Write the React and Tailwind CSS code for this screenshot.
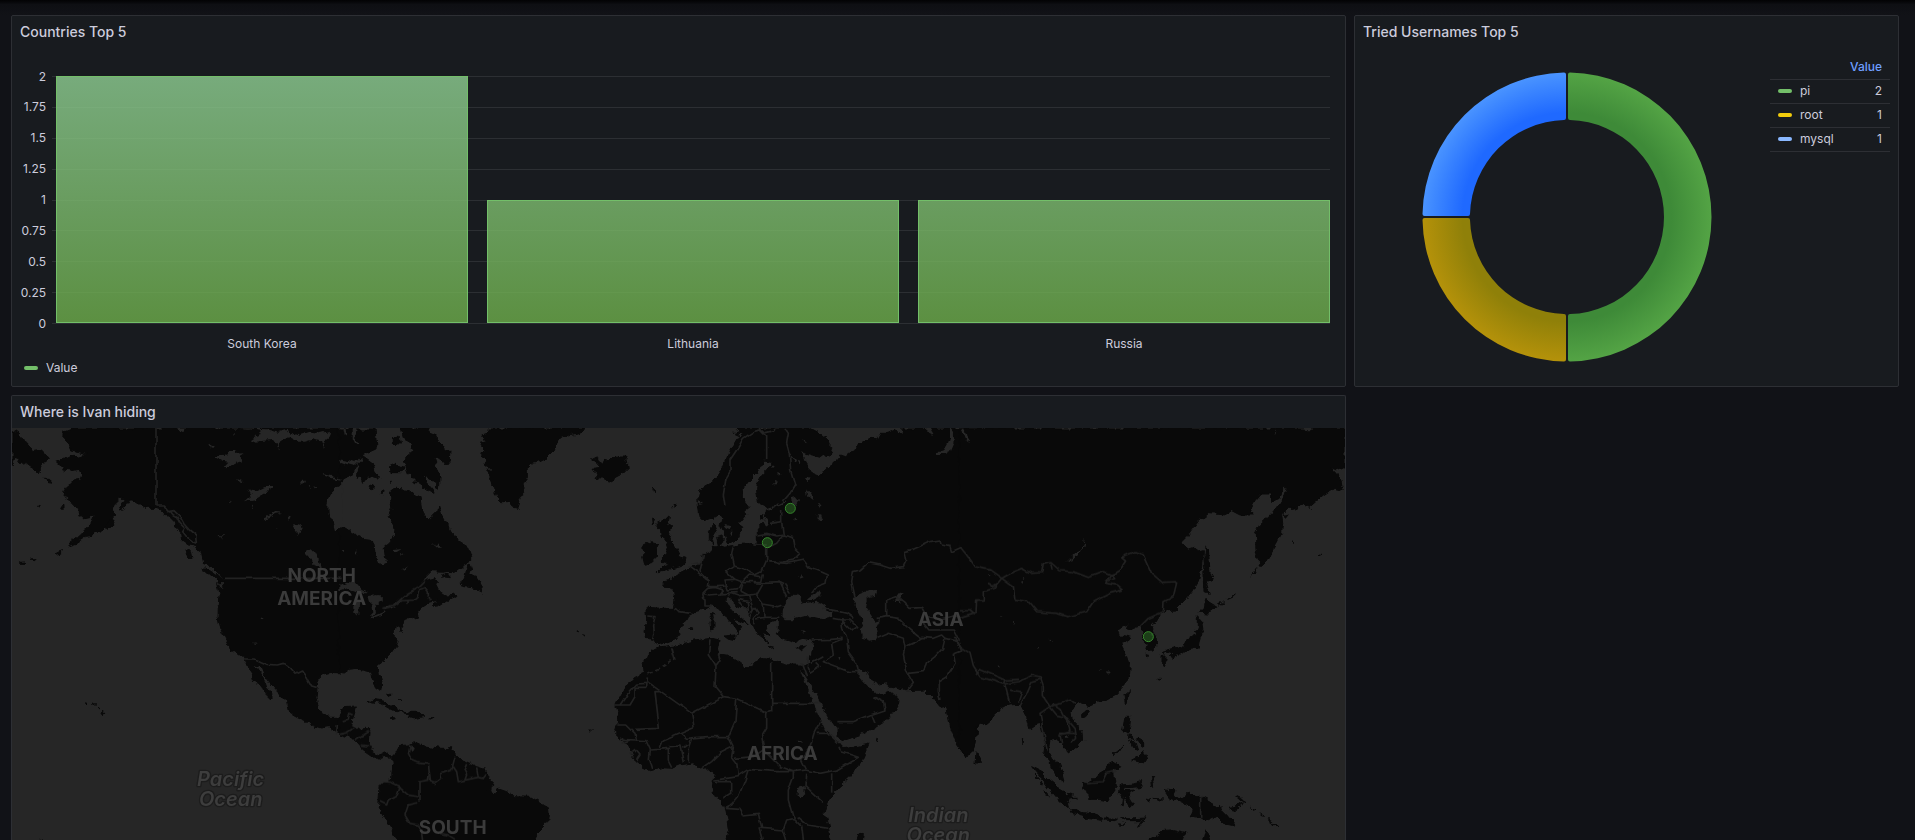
import React from "react";

const TICKS = ["2", "1.75", "1.5", "1.25", "1", "0.75", "0.5", "0.25", "0"];

const COUNTRIES = [
  { name: "South Korea", bar: "h-full from-[#8fcf93cc] via-[#7ebd70cc] to-[#6dad4acc]" },
  { name: "Lithuania", bar: "h-1/2 from-[#7ebd70cc] to-[#6dad4acc]" },
  { name: "Russia", bar: "h-1/2 from-[#7ebd70cc] to-[#6dad4acc]" },
];

const USERS = [
  { name: "pi", value: 2, swatch: "bg-[#73bf69]" },
  { name: "root", value: 1, swatch: "bg-[#f2cc0c]" },
  { name: "mysql", value: 1, swatch: "bg-[#8ab8ff]" },
];

/* Map geometry is stored in four regions; each has its own x origin. */
const REGIONS = [
  {
    x: 0,
    land: [
      "36,92 55,100 75,122 92,140 97,155 125,150 148,175 135,188 120,190 125,208 112,218 95,205 75,190 60,178 45,172 36,198",
      "127,238 145,238 158,250 140,247",
      "180,318 195,316 195,324 184,325",
      "218,84 190,95 188,112 205,130 215,150 240,155 262,162 235,168 215,165 190,178 170,187 190,200 185,210 215,213 240,208 248,225 243,240 225,243 205,255 195,270 192,290 205,300 210,310 225,318 235,325 240,352 262,348 283,345 275,362 262,385 245,402 225,420 203,437 230,428 255,412 270,410 300,392 312,380 330,365 338,350 345,345 335,335 345,310 360,295 375,295 368,308 355,330 375,322 390,300 398,300 405,312 425,312 440,322 468,322 485,328 500,345 520,365 530,385 545,400 548,420 565,432 585,435 590,450 605,460 612,490 635,500 655,520 670,540 672,565 650,548 657,580 655,620 654,650 660,680 672,705 682,725 695,750 715,762 730,772 738,785 748,810 765,835 760,842 785,855 795,880 812,897 820,892 808,870 795,850 785,830 772,810 760,792 780,800 790,825 805,845 822,865 845,888 862,905 866,925 870,940 890,952 920,965 945,978 962,984 985,980 1000,990 1022,1003 1022,952 990,952 970,945 955,925 948,890 952,860 955,835 970,822 1000,815 1022,815 1022,84",
      "318,378 330,362 345,360 340,375 325,388",
      "612,502 632,512 655,528 672,545 655,545 635,530 615,512",
      "558,445 570,450 576,476 565,468",
      "162,462 175,455 188,452 178,460",
      "56,487 75,486 74,490 58,490",
      "95,480 105,478 103,482",
      "302,938 308,931 315,939 308,947",
      "278,914 284,918 279,918",
      "294,922 300,926 294,926",
      "260,908 264,911 260,911",
      "113,312 121,314 116,318",
      "116,1314 124,1316 126,1320 118,1320",
    ],
    water: [
      "1028,252 1005,265 990,290 982,315 983,345 1000,360 1008,388 1020,384 1028,386",
      "645,172 665,165 690,155 712,150 705,162 728,160 722,175 728,185 715,182 700,190 690,200 680,205 670,198 682,185 665,182",
      "735,300 755,290 752,280 745,268 765,275 780,268 800,258 822,258 805,268 795,282 780,290 765,300 750,303",
      "788,352 805,345 825,335 850,338 825,342 808,350 790,358",
      "918,455 935,445 945,455 955,475 962,500 958,510 945,490 930,475 918,462",
      "755,118 770,108 785,102 780,92 720,84 800,88 835,98 858,92 865,105 885,98 900,105 930,95 960,100 990,92 985,115 970,125 975,145 965,125 940,118 915,125 895,125 870,112 850,115 835,125 840,155 830,130 815,120 790,122 770,125",
      "530,84 550,96 560,84",
      "628,135 638,145 632,152",
      "718,240 732,246 722,250",
      "900,245 915,245 910,258 902,256",
      "926,256 934,256 930,262",
      "943,255 953,260 950,266",
      "965,222 1000,228 1022,240 995,234 968,226",
      "885,370 902,375 905,388 895,405 890,390 880,382",
      "862,350 872,352 866,366",
      "655,398 662,406 675,406 664,410 670,420 658,408",
      "780,652 790,655 788,664",
      "758,728 770,727 768,732",
      "683,308 692,310 688,314",
      "755,316 764,322 758,324",
      "826,382 832,382 830,388",
      "703,95 708,100 704,112",
    ],
    lines: [
      "468,84 468,318 490,318 505,335 522,332 540,350 552,372 568,390 590,408 592,430 580,425 560,410 548,395 555,385 540,370 530,350 520,345 512,335",
      "672,535 1022,535",
      "735,777 765,777 800,793 832,795 850,790 870,805 885,823 905,813 922,835 935,858 950,862",
      "1012,975 1010,1000",
    ],
  },
  {
    x: 1020,
    land: [
      "-2,84 60,84 70,90 105,90 112,145 90,155 65,165 100,190 105,215 122,238 100,235 85,228 68,250 60,230 48,235 62,190 45,205 35,225 -2,240",
      "160,112 178,112 182,128 170,140 160,130",
      "148,200 170,190 178,200 195,205 180,218 150,218",
      "185,84 260,84 270,100 290,108 300,130 330,155 328,180 312,198 295,175 280,170 290,200 300,235 298,265 285,260 290,245 265,238 245,225 255,240 280,268 282,280 250,262 225,245 205,220 190,180 210,160 222,150 205,125 190,110",
      "84,262 98,256 104,264 92,272",
      "124,270 132,270 130,284 124,280",
      "145,242 154,240 150,248",
      "150,268 175,265 200,268 220,285 240,295 245,325 250,340 265,362 280,345 290,335 295,315 305,345 325,380 335,400 360,425 385,440 395,470 395,485 375,490 355,510 340,518 270,515 250,535 240,555 225,570 255,538 290,530 300,545 290,555 300,575 320,588 345,585 350,590 320,603 290,622 280,612 300,598 285,600 265,605 250,615 230,630 232,645 238,652 215,655 195,662 190,685 180,695 175,680 165,685 165,710 175,720 170,740 150,765 120,785 112,800 115,825 125,855 122,872 110,865 98,838 95,815 75,810 55,805 30,808 10,822 -2,818 -2,384 20,388 45,405 70,418 98,422 103,440 105,462 118,480 128,495 140,490 135,465 132,440 150,425 163,405 165,385 155,365 145,350 155,325 152,295",
      "392,490 398,510 392,525 410,530 420,545 430,560 425,573 410,565 395,560 380,558 358,555 365,545 375,525 380,505",
      "305,522 325,524 328,530 310,528",
      "-2,945 12,920 50,918 42,945 38,960 35,980 50,985 75,982 90,995 88,1035 95,1052 120,1065 140,1058 155,1070 148,1078 130,1065 122,1078 100,1070 85,1060 68,1048 45,1022 20,1010 -2,1003",
      "78,908 100,898 130,903 155,915 175,928 190,937 165,934 145,924 120,910 95,905",
      "192,934 210,937 230,937 255,948 240,952 220,957 205,952 210,944",
      "147,954 157,952 166,956 156,959",
      "270,953 284,953 284,957 271,957",
      "146,876 152,880 152,888 148,886",
      "178,895 184,900 180,902",
      "331,1040 338,1040 337,1047 331,1046",
      "155,1075 165,1055 180,1040 205,1038 222,1025 240,1035 270,1040 300,1045 330,1045 345,1065 375,1085 410,1100 435,1108 445,1130 460,1145 455,1165 440,1175 470,1165 500,1175 525,1190 575,1192 605,1212 625,1220 628,1250 615,1275 590,1300 582,1330 172,1330 155,1290 135,1255 115,1220 118,1190 120,1160 135,1145 155,1130 158,1100",
      "445,84 735,84 715,98 690,105 665,115 650,125 640,155 620,175 600,185 575,190 565,205 565,230 550,250 548,280 540,300 535,325 515,320 505,305 485,305 470,290 460,265 450,240 440,215 455,212 430,190 440,182 420,160 435,152 420,130 440,125 425,105 442,100",
      "752,178 770,168 775,180 785,190 790,178 805,180 820,175 835,165 850,165 862,185 865,205 850,220 830,230 808,243 785,235 765,232 775,222 755,208 775,205 770,192",
      "728,704 734,706 730,708",
      "712,692 716,695 712,696",
      "751,990 757,990 753,994",
    ],
    water: [
      "10,84 20,84 22,110 14,104",
      "35,84 50,84 45,120 55,135 45,135 35,115",
      "-2,178 25,183 45,190 60,172 64,180 45,198 20,192 -2,184",
      "-2,555 20,545 45,548 60,565 85,580 60,580 40,572 20,565 -2,572",
      "40,620 45,600 58,605 55,640 48,650 40,640",
      "85,588 115,585 130,600 120,605 105,615 108,640 95,650 92,625 90,605",
      "92,652 120,640 135,630 140,635 115,648 95,655",
      "130,625 155,618 165,622 145,628",
      "155,450 185,447 170,456 158,457",
      "272,432 285,438 290,430 295,442 312,445 290,447",
      "190,505 205,496 198,508",
      "215,1035 224,1045 220,1058 214,1050",
      "455,1160 475,1160 470,1180 455,1178",
      "8,450 18,450 14,456",
      "182,462 192,464 186,468",
      "50,450 56,462 50,465",
      "165,690 172,695 170,712 164,710",
    ],
    lines: [
      "130,625 165,618 185,602 222,600 235,588 240,568 255,562 265,575 265,595 272,600",
      "160,618 200,582 235,562 255,542",
      "204,600 204,612",
      "8,965 25,960 28,940 38,945",
      "0,1003 20,998 40,985",
      "45,1020 60,1010 88,995",
      "65,1035 88,1038",
      "210,1035 205,1060 215,1080 240,1090 265,1092 268,1120 265,1140 240,1145 240,1165 240,1205",
      "130,1148 155,1150 180,1162 172,1185 145,1200 140,1215 120,1205",
      "175,1160 205,1185 235,1190",
      "235,1208 205,1215 195,1245 210,1270 235,1275 245,1300 248,1320",
      "268,1115 272,1145 285,1150 305,1135 302,1122 335,1110 340,1090 345,1070",
      "340,1100 350,1115 355,1145 375,1140 380,1125 372,1110 380,1092",
      "375,1140 415,1132 410,1102",
      "415,1132 430,1135 442,1120",
      "300,1300 325,1305 345,1318",
    ],
  },
  {
    x: 1860,
    land: [
      "345,84 360,92 340,100 358,108 345,130 330,150 320,180 310,205 290,235 265,255 240,270 233,290 235,320 240,350 255,365 275,358 295,345 305,355 300,375 310,395 320,415 325,432 340,425 355,410 365,385 360,370 380,345 378,330 390,320 370,295 370,265 385,245 405,225 425,195 430,180 455,185 455,200 430,225 412,245 410,270 415,310 440,322 470,315 500,300 495,312 460,325 435,335 440,355 450,370 440,385 425,370 412,385 412,425 400,435 380,430 355,435 340,440 315,445 300,440 290,438 275,435 268,415 268,395 285,375 292,390 282,405 275,425 280,445 270,455 250,465 245,480 225,500 205,500 190,520 165,528 158,540 128,545 135,555 160,570 165,600 160,625 125,625 85,622 78,635 80,660 75,690 80,715 100,718 112,735 130,728 165,720 180,700 175,685 200,665 212,640 250,630 270,620 280,612 300,635 325,655 345,680 355,695 350,705 365,680 340,655 360,660 385,675 365,655 335,635 320,610 318,598 330,595 345,610 370,625 385,640 395,665 405,690 415,705 425,715 445,730 430,700 455,710 435,690 445,675 455,665 475,665 475,690 470,700 480,715 515,725 545,715 575,720 580,735 575,760 565,790 550,795 515,795 480,785 455,780 430,775 400,785 395,800 375,800 355,785 330,770 300,765 295,745 300,720 275,715 240,720 200,728 165,735 120,740 105,745 80,765 70,790 72,815 40,830 15,865 0,890 -12,915 -5,940 -8,970 -15,995 0,1010 15,1030 30,1050 40,1075 70,1100 95,1112 130,1103 155,1105 180,1095 220,1088 240,1110 275,1105 285,1120 280,1165 290,1190 315,1220 322,1250 328,1290 318,1330 632,1330 625,1280 612,1240 620,1205 640,1175 690,1130 720,1090 745,1032 700,1042 670,1045 658,1025 675,1020 720,1005 760,985 800,960 825,930 840,905 815,880 800,868 815,862 860,872 915,870 940,895 960,920 980,915 985,950 995,995 1010,1035 1035,1070 1055,1055 1065,1030 1070,990 1080,980 1080,84 850,84 845,105 830,90 800,100 780,100 770,120 750,115 720,130 700,155 680,170 665,165 645,190 620,205 600,230 575,220 560,195 555,175 540,150 560,160 600,172 630,160 635,145 625,120 600,100 570,84",
      "130,355 145,355 140,375 155,380 150,400 145,415 160,430 170,450 180,470 195,475 190,495 170,500 145,505 115,515 130,500 145,495 120,490 130,470 145,460 135,440 140,425 120,410 118,385 110,375",
      "65,440 85,430 95,425 115,430 108,445 110,470 95,485 70,490 65,470 75,460",
      "272,635 280,635 283,655 275,660",
      "270,665 285,660 285,688 272,690",
      "312,708 345,705 345,722 325,718",
      "440,740 465,745 450,748",
      "533,742 560,738 545,752",
      "206,680 214,680 210,684",
      "422,350 434,350 430,360 422,358",
      "290,415 310,410 308,430 295,435",
      "98,268 103,270 101,278",
      "160,312 166,315 163,322",
      "98,360 106,365 100,378",
      "718,1300 732,1305 728,1330 708,1330",
      "770,1018 778,1020 772,1023",
    ],
    water: [
      "487,650 490,625 500,605 520,585 530,580 550,605 545,612 565,605 590,602 610,615 638,640 635,652 610,658 580,650 555,648 520,658 495,658",
      "560,600 575,588 605,573 598,590 580,600",
      "540,815 555,830 575,860 600,905 625,950 645,980 655,1010 670,1028 655,1030 640,1010 615,990 600,955 580,910 560,860",
      "655,1030 680,1022 705,1012 735,1025 700,1040 668,1044",
      "715,808 735,815 750,840 775,855 800,850 812,862 795,880 770,885 755,870 735,850 715,825",
      "990,84 1002,100 1000,130 985,165 950,165 945,155 970,155 985,130 990,110",
      "905,84 930,84 942,105 920,95",
      "1020,84 1035,90 1040,115 1050,130 1035,120 1028,100",
      "512,290 530,288 540,300 530,318 518,312",
      "558,265 575,285 578,300 565,290",
      "720,580 745,570 768,570 765,590 740,598 735,615 755,645 765,665 780,660 770,680 775,715 755,722 725,712 722,690 735,670 718,640 700,615 705,595",
      "820,600 835,580 855,575 840,592 845,610 835,600",
      "314,372 328,376 325,385 316,382",
      "328,392 334,392 332,408",
      "530,1165 550,1158 556,1180 540,1190 530,1185",
      "515,165 525,178 520,190",
      "530,180 540,182 536,190",
      "558,235 570,240 562,250",
      "475,215 482,225 476,230",
      "462,245 470,250 464,255",
      "590,318 602,320 598,326",
      "595,342 610,352 605,364 592,352",
      "520,355 530,360 522,364",
      "535,525 548,532 540,535",
      "540,690 552,694 546,698",
      "655,770 663,774 658,780",
      "458,195 464,200 460,208",
      "550,120 562,130 554,132",
      "532,1022 545,1022 545,1035 540,1028",
      "330,150 322,175 318,165",
      "352,98 368,100 358,106",
      "236,300 252,308 238,312",
    ],
    lines: [
      "315,320 310,285 318,235 330,215 330,180 350,150 370,115 400,95 420,90 440,110 440,180",
      "420,84 435,98 460,92 465,84",
      "495,84 505,100 500,130 508,160 512,210 525,255 510,280 490,303",
      "485,330 485,365 450,370",
      "485,365 490,405 520,412 525,445 540,460 520,480 480,488 445,485",
      "412,405 440,400 470,408 490,405",
      "490,405 470,430 440,445 440,480 425,515 405,525 365,505 343,498 335,460 340,440",
      "400,435 440,435",
      "250,465 245,490 240,515 265,540 262,560 290,560 320,558 315,540 345,538 320,515 343,500",
      "205,500 240,525 265,540",
      "215,492 242,488",
      "245,580 248,595 255,600 255,615 275,615",
      "245,580 260,565 285,562 310,570 300,582 265,585 245,580",
      "160,625 180,635 212,640",
      "82,648 105,650 98,680 100,700 95,718",
      "320,558 325,570 355,565 365,545 345,538",
      "365,545 385,525 425,530",
      "365,545 400,545 425,545 430,520",
      "365,550 360,575 385,588 410,585 430,550 400,548",
      "430,550 480,548 500,590",
      "475,545 495,555 510,580",
      "410,585 430,612 475,620 490,615",
      "300,582 325,580 350,578",
      "325,590 330,580 360,590 385,588 395,610 400,630 390,650",
      "355,598 385,605 388,628 370,622 355,598",
      "385,640 405,625 415,640 400,655 398,670",
      "430,612 432,655 405,660",
      "432,655 475,655",
      "445,485 500,490 550,480 570,505 600,515 622,525 618,550 590,560 575,580",
      "610,625 645,632 680,640 700,655",
      "638,655 665,660 690,660 710,680 695,690 680,675 665,660 668,685 680,715",
      "575,720 630,718 665,715",
      "705,590 695,545 700,515 720,510 745,488 780,495 810,505 850,500 860,480 855,455 880,448 930,425 960,420 965,435 990,440 995,455 1025,442",
      "800,650 800,600 830,590 850,605 870,625 905,622 920,650 950,655",
      "770,655 800,650 835,655 860,680 890,705 905,715",
      "770,715 805,700 850,715 855,740 850,765 860,815 880,850 865,870",
      "855,740 890,725 905,712 940,715 965,705 975,715 968,745 945,770 920,790 910,815 865,820",
      "975,715 1015,725 1025,750 1000,760 1005,790 980,830 955,845 955,875 960,900",
      "1000,710 1025,742",
      "905,660 930,690 1000,690 1015,720",
      "960,660 1010,650 1020,655",
      "680,715 685,755 710,790 715,815 690,815 610,785 640,765 635,730 665,718",
      "575,790 610,770",
      "565,770 562,800 570,820 600,800 590,790",
      "545,790 560,830",
      "655,965 700,965 750,945 795,930 790,905 760,890",
      "755,945 765,970",
      "155,745 165,780",
      "85,848 215,940 310,890 285,860 288,800 265,765 270,718",
      "285,800 300,780 295,760",
      "455,790 455,935",
      "455,910 595,910",
      "310,890 350,895 440,938 455,935",
      "440,938 440,985 425,1010 430,1040",
      "350,895 345,965 325,1010 340,1040",
      "82,835 80,862 45,862 45,890 30,915 -12,915",
      "82,850 50,852 20,885 0,915",
      "120,875 105,875 118,985 45,988",
      "-8,975 20,975 45,1000 50,1020 0,1018",
      "215,940 222,980 180,998 130,1020 120,1045",
      "180,998 200,1015 260,1010 325,1010",
      "50,1020 75,1022 88,1050 85,1075 95,1110",
      "88,1050 120,1048 145,1045 145,1080 155,1100",
      "145,1040 180,1038 190,1088",
      "205,1088 205,1045 215,1015",
      "187,1045 200,1035",
      "5,1030 30,1020",
      "30,1060 45,1048 60,1065 50,1080",
      "240,1110 275,1085 300,1060 340,1040 335,1070 350,1090 355,1130 300,1138 280,1140",
      "345,1075 400,1070 430,1050 480,1100 520,1115 470,1115 385,1108 350,1130",
      "385,1108 375,1140 355,1190 335,1215 315,1225 360,1228 370,1245 415,1240 425,1285 490,1290 500,1260 520,1255 505,1200 505,1170 520,1130 520,1115",
      "600,965 582,1000 570,1040 545,1080 560,1110 600,1120 650,1110 715,1072 665,1055 660,1040",
      "590,1000 625,1000 655,1028",
      "560,1110 520,1115",
      "635,1120 635,1175",
      "560,1120 558,1160 612,1210",
      "530,1250 560,1275 625,1285",
      "520,1255 545,1280 550,1320",
      "490,1290 500,1320",
      "420,1285 430,1320",
      "285,1145 335,1145 335,1180 310,1195",
    ],
    dashed: ["85,822 120,808 155,782"],
  },
  {
    x: 2880,
    land: [
      "-2,84 1155,84 1155,200 1130,212 1115,205 1140,235 1150,268 1125,262 1090,285 1048,322 1030,312 1000,325 985,325 965,345 968,370 965,400 950,430 935,455 920,480 898,498 888,450 886,400 900,372 930,345 960,310 985,268 970,265 960,290 935,308 935,282 905,282 885,305 868,335 875,345 840,345 815,332 800,342 745,338 720,358 690,400 660,430 685,450 700,445 715,455 727,452 725,500 715,540 695,575 670,605 645,630 625,632 600,648 590,665 570,675 580,695 592,715 592,735 575,750 560,752 565,735 550,715 552,695 540,680 520,685 505,695 500,680 515,665 490,680 465,690 485,705 515,712 495,725 485,740 500,770 508,795 505,830 490,865 470,885 440,900 415,905 385,918 378,922 355,905 345,915 330,935 340,965 365,990 368,1020 350,1040 325,1062 318,1045 300,1025 285,1015 270,1020 265,1050 285,1085 300,1100 308,1130 312,1145 290,1130 275,1110 270,1085 250,1065 255,1035 248,1000 240,970 225,975 210,985 200,950 185,920 180,910 150,912 125,920 115,935 80,965 48,985 45,1020 40,1050 20,1070 -2,1045",
      "48,1055 65,1080 60,1092 45,1092",
      "735,440 745,445 748,490 750,520 762,540 745,540 740,555 748,580 735,575 733,540 730,480",
      "735,595 745,605 770,620 760,630 740,642 715,640 730,625",
      "715,650 728,665 732,690 720,710 715,742 690,745 670,762 650,762 625,755 610,765 620,750 650,742 670,740 680,722 705,705 715,680",
      "600,770 618,768 618,780 610,797 600,785",
      "628,765 645,760 650,768 635,775",
      "492,885 508,872 505,895 496,908",
      "365,940 378,930 388,940 375,955 365,950",
      "495,955 515,955 512,980 500,998 488,990",
      "500,1002 512,1004 520,1015 508,1012",
      "512,1020 522,1025 530,1048 520,1042",
      "535,1018 548,1022 548,1040 540,1035",
      "525,1012 534,1016 528,1020",
      "515,1080 535,1070 550,1055 560,1080 550,1095 535,1085",
      "460,1064 475,1052 488,1038 478,1055",
      "368,1145 390,1148 410,1125 435,1110 440,1095 455,1087 478,1102 460,1112 465,1150 470,1160 455,1180 445,1202 420,1198 385,1198 380,1180 370,1165",
      "215,1100 245,1115 270,1140 300,1165 325,1195 332,1222 300,1205 275,1175 250,1140 230,1120",
      "332,1228 370,1238 400,1242 428,1252 425,1258 380,1252 335,1240",
      "432,1254 450,1254 475,1258 462,1262 435,1260",
      "485,1256 520,1256 560,1254 540,1262 495,1262",
      "528,1275 560,1256 548,1270",
      "475,1268 495,1272 482,1276",
      "485,1155 520,1152 545,1145 540,1157 500,1160 495,1172 525,1170 505,1180 510,1195 520,1212 515,1220 500,1200 492,1190 490,1220 485,1215 487,1195 478,1180",
      "572,1135 584,1132 578,1148 584,1165 574,1160",
      "558,1195 572,1198 562,1202",
      "578,1195 608,1197 595,1202",
      "325,1180 340,1184 335,1192 355,1192 330,1198",
      "610,1170 645,1172 640,1182 660,1195 685,1180 720,1190 760,1210 785,1230 800,1245 828,1278 790,1270 770,1250 745,1262 720,1255 690,1250 700,1225 670,1210 650,1200 630,1196",
      "805,1225 830,1222 850,1208 840,1225 820,1230",
      "830,1188 845,1195 858,1208 842,1200",
      "872,1222 886,1230 880,1230",
      "900,1240 915,1248 908,1248",
      "925,1256 940,1264 930,1262",
      "940,1270 956,1280 945,1276",
      "560,1330 585,1312 605,1295 640,1292 675,1300 662,1330",
      "726,1330 738,1283 755,1330",
      "240,1140 250,1155 243,1152",
      "255,1172 268,1188 258,1184",
      "225,1122 236,1135 228,1132",
      "775,612 790,602 788,607",
      "800,598 826,582 815,592",
      "875,528 893,503 885,520",
      "998,418 1004,424 1002,432",
      "1073,465 1080,466 1076,470",
      "972,345 984,342 976,352",
      "558,764 566,766 560,770",
      "588,832 598,832 592,838",
      "184,1015 188,1015 186,1038",
    ],
    water: [
      "375,415 370,440 350,470 318,490 340,468 362,445",
      "945,88 950,98 946,104",
      "1032,84 1058,84 1050,94 1040,94",
      "262,716 276,718 268,724",
      "120,644 128,648 122,651",
      "232,744 244,745 236,749",
      "84,525 92,530 86,532",
      "180,548 188,545 184,555",
      "190,536 196,534 194,540",
      "445,815 452,820 446,826",
      "416,808 426,810 420,814",
      "110,796 120,800 112,803",
      "156,660 160,664 157,672",
      "338,1002 346,1002 342,1008",
      "318,1002 326,1010 318,1010",
    ],
    lines: [
      "125,535 160,515 185,505 215,520 245,518 250,490 270,485 300,512 340,515 385,532 430,515 455,525 440,550 470,555 487,570 450,580 400,605 380,635 325,650 290,640 230,635 205,605 165,598 160,560 125,535",
      "270,490 273,508",
      "455,525 480,510 500,480 488,470 525,455 550,465 575,520 610,550 650,548 640,590 612,605 610,635 565,655 540,680",
      "440,545 465,535 455,520",
      "0,440 20,465 45,500 90,510 125,535 100,565 70,575 70,600 50,600 48,640 0,655",
      "85,545 95,560 110,550",
      "0,740 30,760 40,800 60,830 130,852 135,840 60,808 48,825",
      "130,852 180,845 215,825 240,830 250,860 250,890 270,920 300,910 330,898 345,910",
      "135,840 180,838",
      "135,855 148,905",
      "150,870 185,875 175,905",
      "180,915 200,880 215,845 240,838",
      "270,920 240,940 250,990 262,1050",
      "270,920 290,945 310,950 325,970 330,995 300,1005 305,1030",
      "280,912 300,925 310,945 345,985 350,1015 335,1030",
      "300,1000 345,1000",
      "722,1190 722,1258",
      "380,1148 430,1145 440,1120 470,1112",
      "0,632 30,632 45,645",
      "572,705 585,700",
    ],
  },
];

const MARKERS = [
  { name: "Russia", x: 2371, y: 325 },
  { name: "Lithuania", x: 2302, y: 428 },
  { name: "South Korea", x: 3445, y: 710 },
];

const CONTINENTS = [
  { text: "NORTH", x: 965, y: 547 },
  { text: "AMERICA", x: 965, y: 614 },
  { text: "SOUTH", x: 1358, y: 1302 },
  { text: "AFRICA", x: 2347, y: 1079 },
  { text: "ASIA", x: 2822, y: 678 },
];

const OCEANS = [
  { text: "Pacific", x: 692, y: 1159 },
  { text: "Ocean", x: 692, y: 1218 },
  { text: "Indian", x: 2815, y: 1266 },
  { text: "Ocean", x: 2815, y: 1325 },
];

function Panel({ title, className, children }) {
  return (
    <section className={`flex flex-col rounded-xs border border-[#2d2f34] bg-[#181b1f] ${className}`}>
      <h2 className="h-8 shrink-0 px-2 text-sm leading-8 font-medium">{title}</h2>
      {children}
    </section>
  );
}

function BarChart() {
  return (
    <div className="pt-7 pb-[9px]">
      <div className="relative">
        <div className="flex h-[248px] flex-col justify-between pr-[15px]">
          {TICKS.map((tick) => (
            <div key={tick} className="flex h-px items-center gap-[6px]">
              <span className="w-[34px] text-right leading-4">{tick}</span>
              <span className="h-px flex-1 bg-[#2c2f33]" />
            </div>
          ))}
        </div>
        <div className="absolute top-0 right-[15px] bottom-px left-11 flex items-end gap-[19px]">
          {COUNTRIES.map((c) => (
            <div key={c.name} className={`flex-1 border border-[#73bf69] bg-linear-to-b bg-origin-border ${c.bar}`} />
          ))}
        </div>
      </div>
      <div className="mt-[11px] mr-[15px] ml-11 flex gap-[19px]">
        {COUNTRIES.map((c) => (
          <span key={c.name} className="flex-1 text-center leading-[18px]">{c.name}</span>
        ))}
      </div>
      <div className="mt-[6px] ml-3 flex items-center gap-2 leading-[18px]">
        <span className="h-1 w-[14px] rounded-full bg-[#73bf69]" />
        Value
      </div>
    </div>
  );
}

function Donut() {
  return (
    <svg viewBox="-145 -145 290 290" className="h-[290px] w-[290px]" role="img" aria-label="Tried usernames">
      <defs>
        <radialGradient id="green" gradientUnits="userSpaceOnUse" cx="0" cy="0" r="145">
          <stop offset="0.72" stopColor="#3e8a38" />
          <stop offset="1" stopColor="#54a445" />
        </radialGradient>
        <radialGradient id="yellow" gradientUnits="userSpaceOnUse" cx="0" cy="0" r="145">
          <stop offset="0.72" stopColor="#8f8009" />
          <stop offset="1" stopColor="#b5920a" />
        </radialGradient>
        <radialGradient id="blue" gradientUnits="userSpaceOnUse" cx="0" cy="0" r="145">
          <stop offset="0.72" stopColor="#1f69ff" />
          <stop offset="1" stopColor="#4a94ff" />
        </radialGradient>
      </defs>
      <path fill="url(#green)" d="M1 -142.5Q1 -144.5 3 -144.5A144.5 144.5 0 0 1 144.5 0A144.5 144.5 0 0 1 3 144.5Q1 144.5 1 142.5V99Q1 97 3 97A97 97 0 0 0 97 0A97 97 0 0 0 3 -97Q1 -97 1 -99Z" />
      <path fill="url(#yellow)" d="M-1 142.5Q-1 144.5 -3 144.5A144.5 144.5 0 0 1 -144.5 3Q-144.5 1 -142.5 1H-99Q-97 1 -97 3A97 97 0 0 0 -3 97Q-1 97 -1 99Z" />
      <path fill="url(#blue)" d="M-142.5 -1Q-144.5 -1 -144.5 -3A144.5 144.5 0 0 1 -3 -144.5Q-1 -144.5 -1 -142.5V-99Q-1 -97 -3 -97A97 97 0 0 0 -97 -3Q-97 -1 -99 -1Z" />
    </svg>
  );
}

function UsersPanel() {
  return (
    <div className="flex flex-1 px-2">
      <div className="flex flex-1 items-start justify-center pt-6">
        <Donut />
      </div>
      <table className="mt-[7px] w-[120px] shrink-0 self-start">
        <thead>
          <tr className="h-6 border-b border-[#2d2f34]">
            <th className="p-0" aria-label="Username" />
            <th className="p-0 pr-2 text-right font-medium text-[#6e9fff]">Value</th>
          </tr>
        </thead>
        <tbody>
          {USERS.map((u) => (
            <tr key={u.name} className="h-6 border-b border-[#2d2f34]">
              <td className="p-0 pl-2">
                <span className="flex items-center gap-2">
                  <span className={`h-1 w-[14px] rounded-full ${u.swatch}`} />
                  {u.name}
                </span>
              </td>
              <td className="p-0 pr-2 text-right">{u.value}</td>
            </tr>
          ))}
        </tbody>
      </table>
    </div>
  );
}

function WorldMap() {
  return (
    <svg viewBox="36 84 3999 1236" preserveAspectRatio="xMidYMin slice" className="h-full w-full" role="img" aria-label="World map">
      <defs>
        <filter id="coast" filterUnits="userSpaceOnUse" x="0" y="60" width="4080" height="1300" colorInterpolationFilters="sRGB">
          <feTurbulence type="fractalNoise" baseFrequency="0.04" numOctaves="3" seed="4" />
          <feDisplacementMap in="SourceGraphic" scale="22" xChannelSelector="R" yChannelSelector="G" />
          <feGaussianBlur stdDeviation="1.4" />
        </filter>
        <filter id="border" filterUnits="userSpaceOnUse" x="0" y="60" width="4080" height="1300" colorInterpolationFilters="sRGB">
          <feTurbulence type="fractalNoise" baseFrequency="0.03" numOctaves="2" seed="4" />
          <feDisplacementMap in="SourceGraphic" scale="14" xChannelSelector="R" yChannelSelector="G" />
          <feGaussianBlur stdDeviation="1.2" />
        </filter>
      </defs>
      <rect x="0" y="60" width="4080" height="1300" fill="#262626" />
      <g filter="url(#coast)">
        {REGIONS.map((r) => (
          <g key={r.x} transform={`translate(${r.x} 0)`} fill="#090909" stroke="#090909" strokeWidth="3">
            {r.land.map((p) => (
              <polygon key={p} points={p} />
            ))}
          </g>
        ))}
        {REGIONS.map((r) => (
          <g key={r.x} transform={`translate(${r.x} 0)`} fill="#262626">
            {r.water.map((p) => (
              <polygon key={p} points={p} />
            ))}
          </g>
        ))}
      </g>
      <g filter="url(#border)">
        {REGIONS.map((r) => (
          <g key={r.x} transform={`translate(${r.x} 0)`} fill="none" stroke="#222222" strokeWidth="5" strokeLinejoin="round">
            {r.lines.map((p) => (
              <polyline key={p} points={p} />
            ))}
            {(r.dashed || []).map((p) => (
              <polyline key={p} points={p} strokeDasharray="14 10" />
            ))}
          </g>
        ))}
      </g>
      <g textAnchor="middle" fontSize="57" fill="#3b3b3b" className="font-bold">
        {CONTINENTS.map((l) => (
          <text key={l.text} x={l.x} y={l.y}>{l.text}</text>
        ))}
      </g>
      <g textAnchor="middle" fontSize="60" fill="#3d3d3d" stroke="#1c1c1c" strokeWidth="8" strokeLinejoin="round" paintOrder="stroke" className="font-semibold italic">
        {OCEANS.map((l) => (
          <text key={`${l.x}-${l.y}`} x={l.x} y={l.y}>{l.text}</text>
        ))}
      </g>
      {MARKERS.map((m) => (
        <circle key={m.name} cx={m.x} cy={m.y} r="15" fill="#37872d" fillOpacity="0.42" stroke="#37872d" strokeWidth="3" />
      ))}
    </svg>
  );
}

export default function App() {
  return (
    <div className="flex h-screen flex-col overflow-hidden bg-[#111217] font-[Inter,sans-serif] text-xs text-[#ccccdc]">
      <div className="h-[15px] shrink-0 bg-linear-to-b from-[#030304] via-[#0e0f13] via-30% to-[#111217]" />
      <main className="grid min-h-0 flex-1 grid-cols-24 grid-rows-[auto_minmax(0,1fr)] gap-2 pr-4 pl-[11px]">
        <Panel title="Countries Top 5" className="col-span-17">
          <BarChart />
        </Panel>
        <Panel title="Tried Usernames Top 5" className="col-span-7">
          <UsersPanel />
        </Panel>
        <Panel title="Where is Ivan hiding" className="col-span-17 min-h-0 rounded-b-none border-b-0">
          <div className="min-h-0 flex-1">
            <WorldMap />
          </div>
        </Panel>
      </main>
    </div>
  );
}
